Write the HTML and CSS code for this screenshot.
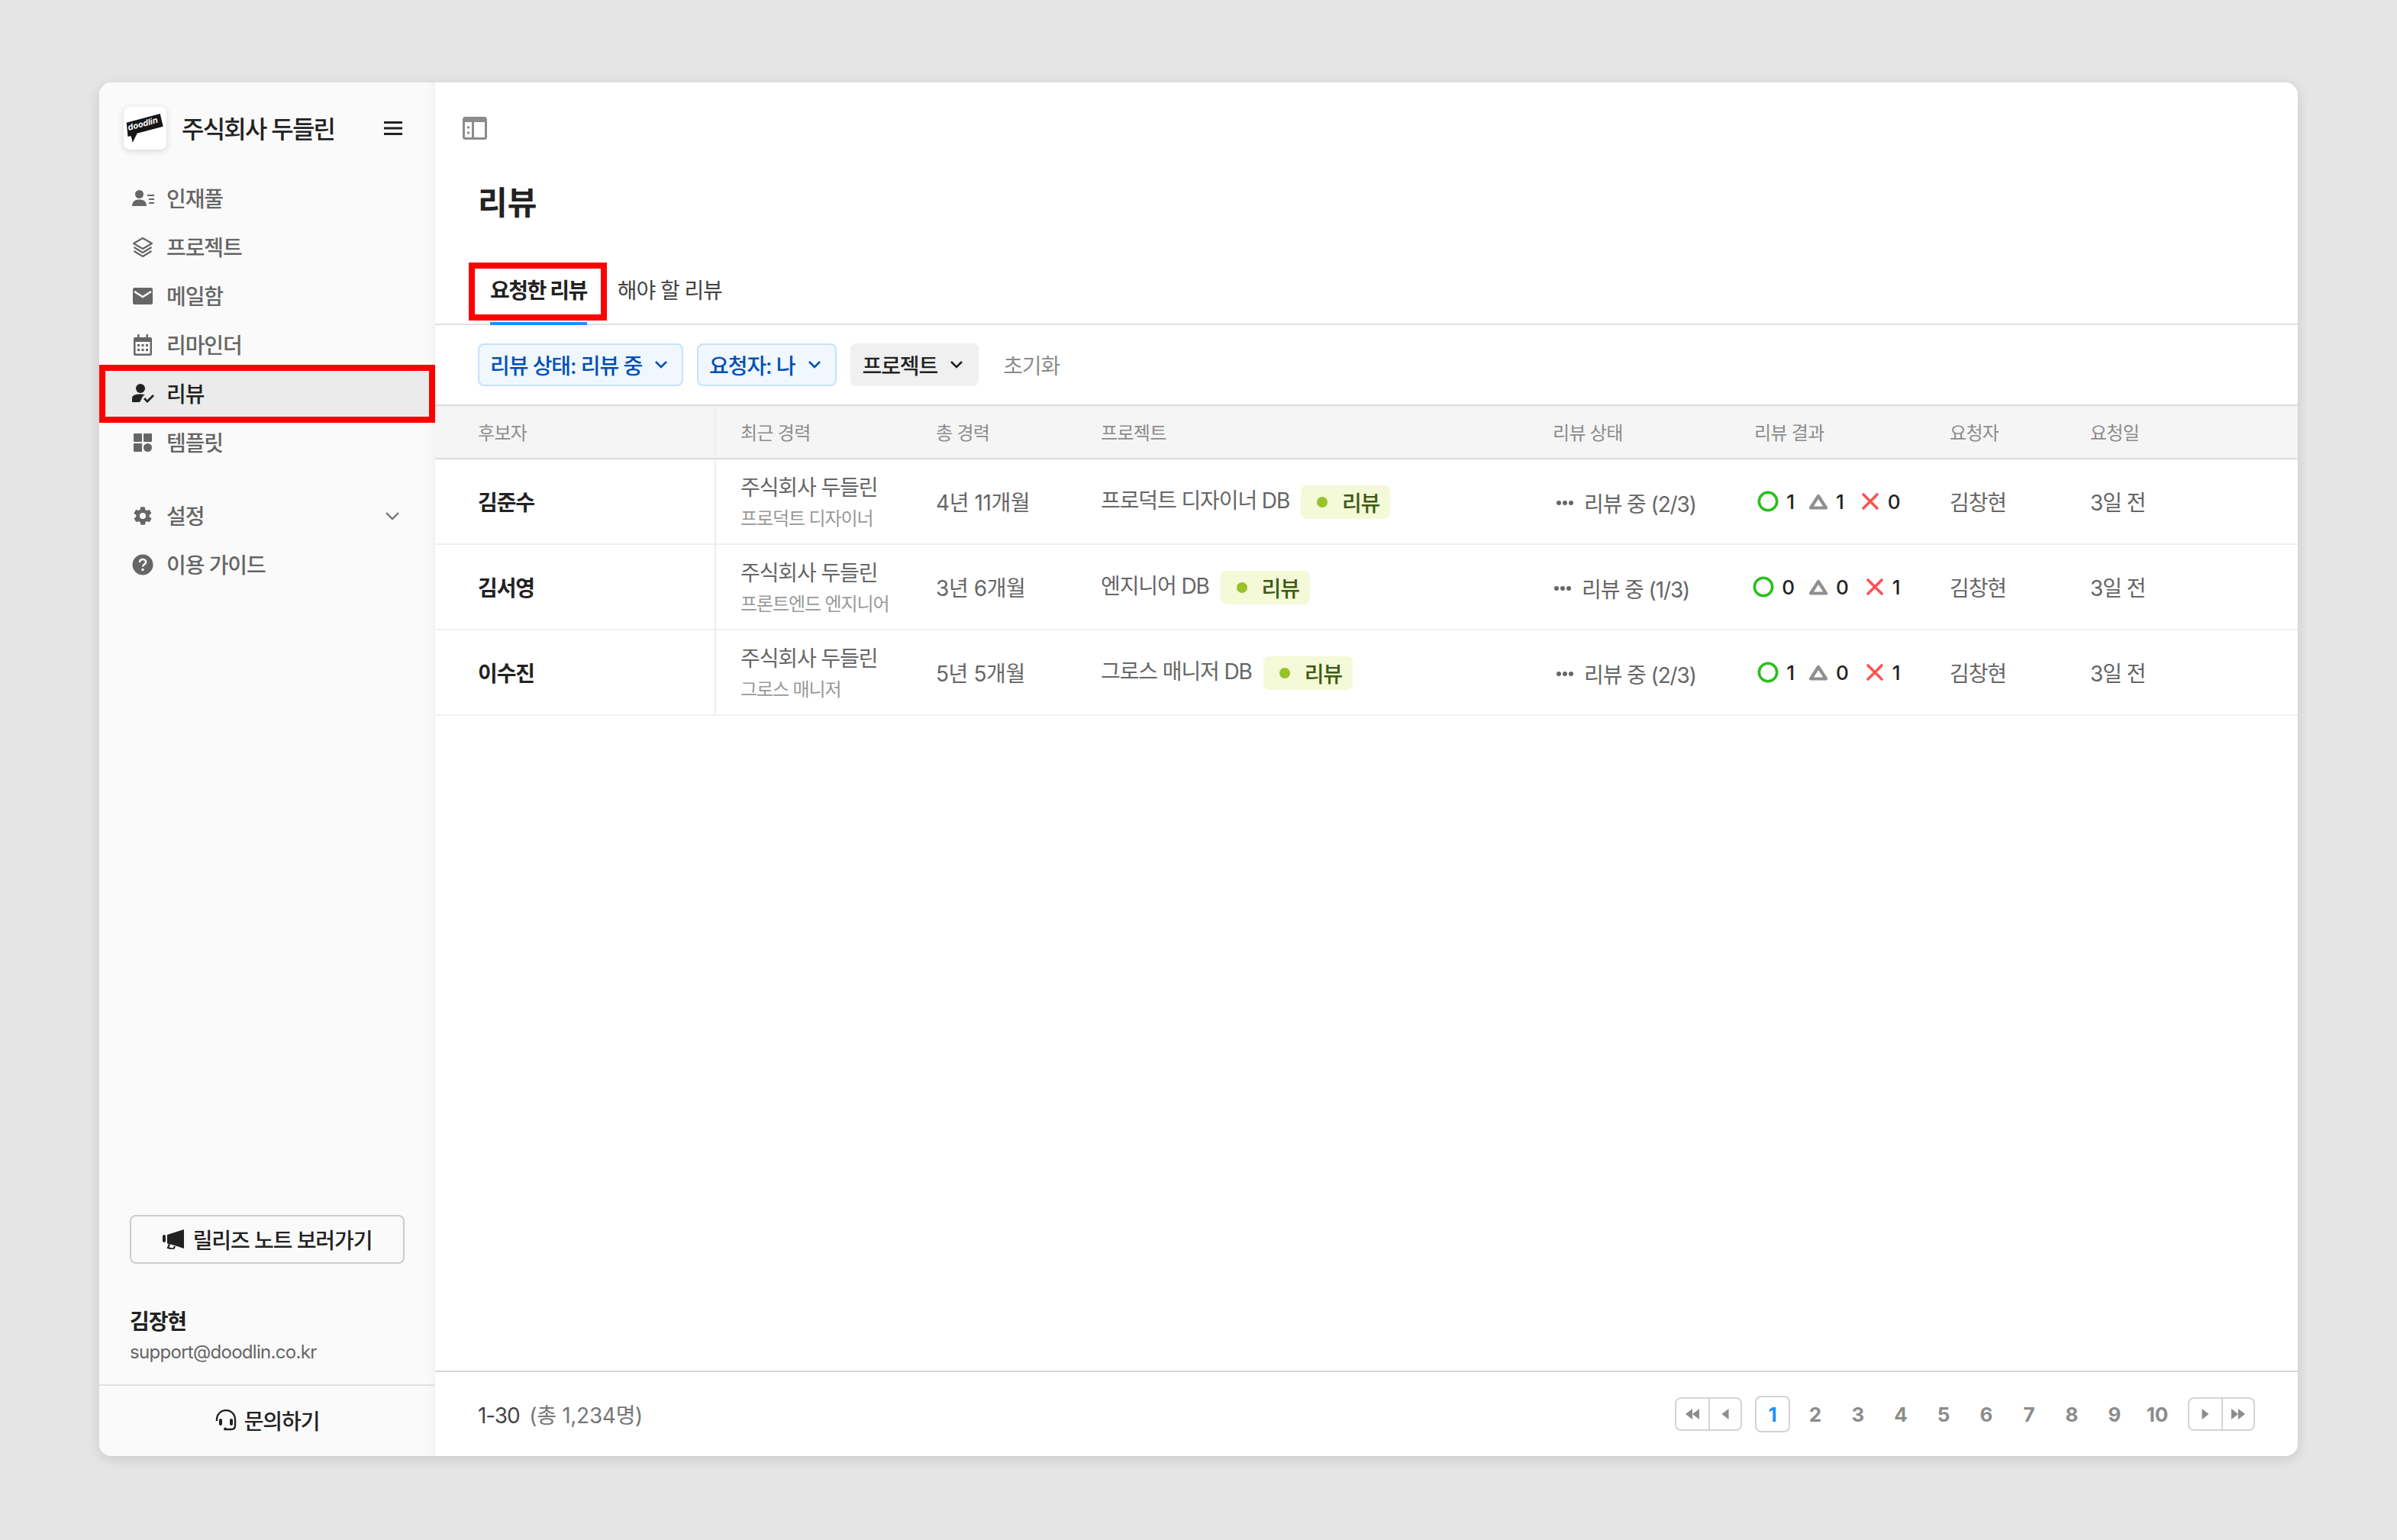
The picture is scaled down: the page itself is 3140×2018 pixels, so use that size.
FILE: index.html
```html
<!DOCTYPE html>
<html lang="ko">
<head>
  <meta charset="UTF-8" />
  <title>리뷰</title>
  <link rel="stylesheet" href="styles.css">
</head>
<body>
  <div class="app">
    <aside class="sidebar">
      <div class="brand">
        <div class="logo">
          <svg width="56" height="56" viewBox="0 0 56 56">
            <polygon points="3.7,20.7 47.7,9 51.7,25.7 17.7,34.7 11.7,46.7 9.7,38.3 5.5,39" fill="#161616"/>
            <text x="6.500" y="31" transform="rotate(-15 6.500 31)" class="logo-text">doodlin</text>
          </svg>
        </div>
        <span class="brand-name">주식회사 두들린</span>
        <svg class="burger" width="26" height="20" viewBox="0 0 26 20"><path d="M1 2.500h24M1 10h24M1 17.500h24" stroke="#222" stroke-width="3.200" fill="none"/></svg>
      </div>

      <nav class="nav">
        <a class="nav-item">
          <svg width="30" height="28" viewBox="0 0 30 28" fill="#666"><circle cx="10.500" cy="8.500" r="5.500"/><path d="M1 24c0-6 4-8.500 9.500-8.500S20 18 20 24z"/><path d="M21 9h9v2h-9zM23 14h7v2h-7zM23 19h7v2h-7z"/></svg>
          <span>인재풀</span>
        </a>
        <a class="nav-item">
          <svg width="28" height="28" viewBox="0 0 28 28" fill="none" stroke="#666" stroke-width="2.200" stroke-linejoin="round"><path d="M14 2 26 9 14 16 2 9z"/><path d="M2.500 14 14 21l11.500-7"/><path d="M2.500 19 14 26l11.500-7"/></svg>
          <span>프로젝트</span>
        </a>
        <a class="nav-item">
          <svg width="28" height="28" viewBox="0 0 28 28"><rect x="1" y="3" width="26" height="22" rx="2.500" fill="#666"/><path d="M3 8l11 7 11-7" fill="none" stroke="#fafafa" stroke-width="2.600"/></svg>
          <span>메일함</span>
        </a>
        <a class="nav-item">
          <svg width="28" height="28" viewBox="0 0 28 28" fill="#666"><path d="M7 0h2.500v4h9V0H21v4h3a2 2 0 0 1 2 2v20a2 2 0 0 1-2 2H4a2 2 0 0 1-2-2V6a2 2 0 0 1 2-2h3zM4.500 10v15.500h19V10z"/><path d="M7 13h3v3H7zM12.500 13h3v3h-3zM18 13h3v3h-3zM7 19h3v3H7zM12.500 19h3v3h-3zM18 19h3v3h-3z"/></svg>
          <span>리마인더</span>
        </a>
        <a class="nav-item is-active">
          <svg width="30" height="28" viewBox="0 0 30 28" fill="#222"><circle cx="12" cy="7" r="6"/><path d="M1 25v-5c0-4 4-5.500 11-5.500 2.500 0 4 .2 6 .8-2.500 1-4 3-4.500 5.500L11 25z"/><path d="M17 20l4 4 8-8" fill="none" stroke="#222" stroke-width="2.800"/></svg>
          <span>리뷰</span>
          <i class="mark"></i>
        </a>
        <a class="nav-item">
          <svg width="28" height="28" viewBox="0 0 28 28" fill="#666"><rect x="2" y="2" width="11" height="11" rx="1"/><rect x="15" y="2" width="11" height="11" rx="1"/><rect x="2" y="15" width="11" height="11" rx="1"/><circle cx="20.500" cy="20.500" r="5.500"/></svg>
          <span>템플릿</span>
        </a>
        <a class="nav-item nav-gap">
          <svg width="28" height="28" viewBox="0 0 24 24" fill="#666"><path d="M19.400 13c.1-.3.1-.7.1-1s0-.7-.1-1l2.100-1.600c.2-.2.2-.4.1-.6l-2-3.500c-.1-.2-.4-.3-.6-.2l-2.500 1c-.5-.4-1.100-.7-1.700-1l-.4-2.600c0-.3-.2-.5-.5-.5h-4c-.3 0-.5.200-.5.500l-.4 2.600c-.6.300-1.200.6-1.700 1l-2.500-1c-.2-.1-.5 0-.6.2l-2 3.500c-.1.200-.1.400.1.600L4.600 11c-.1.300-.1.700-.1 1s0 .7.100 1l-2.100 1.600c-.2.200-.2.400-.1.600l2 3.500c.1.200.4.300.6.200l2.500-1c.5.400 1.100.7 1.700 1l.4 2.600c0 .3.200.5.500.5h4c.3 0 .5-.2.500-.5l.4-2.600c.6-.3 1.200-.6 1.700-1l2.500 1c.2.100.5 0 .6-.2l2-3.500c.1-.2.100-.4-.1-.6zM12 15.500a3.500 3.500 0 1 1 0-7 3.500 3.500 0 0 1 0 7z"/></svg>
          <span>설정</span>
          <svg class="nav-chevron" width="20" height="12" viewBox="0 0 20 12"><path d="M2 2l8 8 8-8" fill="none" stroke="#777" stroke-width="2.400"/></svg>
        </a>
        <a class="nav-item">
          <svg width="28" height="28" viewBox="0 0 28 28"><circle cx="14" cy="14" r="13.500" fill="#666"/><path d="M10 11c0-2.500 1.800-4 4.100-4s4 1.500 4 3.500c0 3-4 3-4 6" fill="none" stroke="#fafafa" stroke-width="2.500"/><circle cx="14" cy="20.500" r="1.700" fill="#fafafa"/></svg>
          <span>이용 가이드</span>
        </a>
      </nav>

      <div class="side-bottom">
        <button class="release-btn">
          <svg width="28" height="26" viewBox="0 0 28 26" fill="#222"><rect x="0" y="7" width="4" height="10" rx="2"/><path d="M6 7l22-7v25l-14-4.500-8-2z"/><path d="M9 19l-2 5 7 2 2-4" fill="none" stroke="#222" stroke-width="2.200"/></svg>
          릴리즈 노트 보러가기
        </button>
        <div class="profile">
          <div class="profile-name">김장현</div>
          <div class="profile-mail">support@doodlin.co.kr</div>
        </div>
      </div>
      <div class="help">
        <svg width="28" height="28" viewBox="0 0 28 28" fill="none" stroke="#222" stroke-width="2.400"><path d="M2 15v-2a12 12 0 0 1 24 0v8c0 3-2 5-5 5h-7"/><rect x="5" y="12" width="4" height="9" rx="2" fill="#222" stroke="none"/><rect x="19" y="12" width="4" height="9" rx="2" fill="#222" stroke="none"/><circle cx="13" cy="25.500" r="2" fill="#222" stroke="none"/></svg>
        문의하기
      </div>
    </aside>

    <main class="main">
      <div class="topbar">
        <svg width="32" height="30" viewBox="0 0 32 30"><rect x="1.500" y="1.500" width="29" height="27" rx="2" fill="#fff" stroke="#8c8c8c" stroke-width="3"/><rect x="1" y="1" width="30" height="6" fill="#8c8c8c"/><path d="M13.500 7v22" stroke="#8c8c8c" stroke-width="3"/><circle cx="7.500" cy="14" r="1.800" fill="#8c8c8c"/><circle cx="7.500" cy="21" r="1.800" fill="#8c8c8c"/></svg>
      </div>
      <h1 class="title">리뷰</h1>
      <div class="tabs">
        <a class="tab is-active">요청한 리뷰<i class="mark"></i></a>
        <a class="tab">해야 할 리뷰</a>
      </div>
      <div class="filters">
        <button class="chip chip-on">리뷰 상태: 리뷰 중 <svg width="18" height="12" viewBox="0 0 18 12"><path d="M2 2l7 7 7-7" fill="none" stroke="currentColor" stroke-width="2.600"/></svg></button>
        <button class="chip chip-on">요청자: 나 <svg width="18" height="12" viewBox="0 0 18 12"><path d="M2 2l7 7 7-7" fill="none" stroke="currentColor" stroke-width="2.600"/></svg></button>
        <button class="chip">프로젝트 <svg width="18" height="12" viewBox="0 0 18 12"><path d="M2 2l7 7 7-7" fill="none" stroke="currentColor" stroke-width="2.600"/></svg></button>
        <span class="reset">초기화</span>
      </div>

      <div class="table">
        <div class="row head">
          <div class="cell first">후보자</div>
          <div class="cell second">최근 경력</div>
          <div class="cell">총 경력</div>
          <div class="cell">프로젝트</div>
          <div class="cell">리뷰 상태</div>
          <div class="cell">리뷰 결과</div>
          <div class="cell">요청자</div>
          <div class="cell">요청일</div>
        </div>

        <div class="row">
          <div class="cell first name">김준수</div>
          <div class="cell second"><div class="company">주식회사 두들린</div><div class="job">프로덕트 디자이너</div></div>
          <div class="cell career">4년 11개월</div>
          <div class="cell">프로덕트 디자이너 DB <span class="badge"><i></i>리뷰</span></div>
          <div class="cell"><span class="status"><b class="dots"><i></i><i></i><i></i></b>리뷰 중 (2/3)</span></div>
          <div class="cell">
            <div class="result">
              <span class="res res-o"><svg width="28" height="28" viewBox="0 0 28 28"><circle cx="14" cy="14" r="11.700" fill="none" stroke="#2dbe1f" stroke-width="3.600"/></svg>1</span>
              <span class="res"><svg width="26" height="24" viewBox="0 0 26 24"><path d="M13 5 23 20.500H3z" fill="none" stroke="#8f8f8f" stroke-width="4.200" stroke-linejoin="round"/></svg>1</span>
              <span class="res res-x"><svg width="24" height="24" viewBox="0 0 24 24"><path d="M3 3l18 18M21 3 3 21" stroke="#ff5252" stroke-width="3.600" stroke-linecap="round"/></svg>0</span>
            </div>
          </div>
          <div class="cell">김창현</div>
          <div class="cell">3일 전</div>
        </div>

        <div class="row">
          <div class="cell first name">김서영</div>
          <div class="cell second"><div class="company">주식회사 두들린</div><div class="job">프론트엔드 엔지니어</div></div>
          <div class="cell career">3년 6개월</div>
          <div class="cell">엔지니어 DB <span class="badge"><i></i>리뷰</span></div>
          <div class="cell"><span class="status status-left"><b class="dots"><i></i><i></i><i></i></b>리뷰 중 (1/3)</span></div>
          <div class="cell">
            <div class="result">
              <span class="res res-o"><svg width="28" height="28" viewBox="0 0 28 28"><circle cx="14" cy="14" r="11.700" fill="none" stroke="#2dbe1f" stroke-width="3.600"/></svg>0</span>
              <span class="res"><svg width="26" height="24" viewBox="0 0 26 24"><path d="M13 5 23 20.500H3z" fill="none" stroke="#8f8f8f" stroke-width="4.200" stroke-linejoin="round"/></svg>0</span>
              <span class="res res-x"><svg width="24" height="24" viewBox="0 0 24 24"><path d="M3 3l18 18M21 3 3 21" stroke="#ff5252" stroke-width="3.600" stroke-linecap="round"/></svg>1</span>
            </div>
          </div>
          <div class="cell">김창현</div>
          <div class="cell">3일 전</div>
        </div>

        <div class="row">
          <div class="cell first name">이수진</div>
          <div class="cell second"><div class="company">주식회사 두들린</div><div class="job">그로스 매니저</div></div>
          <div class="cell career">5년 5개월</div>
          <div class="cell">그로스 매니저 DB <span class="badge"><i></i>리뷰</span></div>
          <div class="cell"><span class="status"><b class="dots"><i></i><i></i><i></i></b>리뷰 중 (2/3)</span></div>
          <div class="cell">
            <div class="result">
              <span class="res res-o"><svg width="28" height="28" viewBox="0 0 28 28"><circle cx="14" cy="14" r="11.700" fill="none" stroke="#2dbe1f" stroke-width="3.600"/></svg>1</span>
              <span class="res"><svg width="26" height="24" viewBox="0 0 26 24"><path d="M13 5 23 20.500H3z" fill="none" stroke="#8f8f8f" stroke-width="4.200" stroke-linejoin="round"/></svg>0</span>
              <span class="res res-x"><svg width="24" height="24" viewBox="0 0 24 24"><path d="M3 3l18 18M21 3 3 21" stroke="#ff5252" stroke-width="3.600" stroke-linecap="round"/></svg>1</span>
            </div>
          </div>
          <div class="cell">김창현</div>
          <div class="cell">3일 전</div>
        </div>
      </div>

      <div class="footer">
        <div class="count"><span>1-30</span> <small>(총 1,234명)</small></div>
        <div class="pager">
          <div class="pg-group">
            <a><svg width="18" height="14" viewBox="0 0 18 14" fill="#8c8c8c"><path d="M9 0v14L0 7zM18 0v14L9 7z"/></svg></a>
            <a><svg width="10" height="14" viewBox="0 0 10 14" fill="#8c8c8c"><path d="M9.500 0v14L.5 7z"/></svg></a>
          </div>
          <div class="pg-nums">
            <a class="is-current">1</a><a>2</a><a>3</a><a>4</a><a>5</a><a>6</a><a>7</a><a>8</a><a>9</a><a>10</a>
          </div>
          <div class="pg-group">
            <a><svg width="10" height="14" viewBox="0 0 10 14" fill="#8c8c8c"><path d="M.5 0v14l9-7z"/></svg></a>
            <a><svg width="18" height="14" viewBox="0 0 18 14" fill="#8c8c8c"><path d="M0 0v14l9-7zM9 0v14l9-7z"/></svg></a>
          </div>
        </div>
      </div>
    </main>
  </div>
</body>
</html>
```

FILE: styles.css
```css
* { box-sizing: border-box; }
html, body { height: 100%; }
body {
  margin: 0;
  background: #e5e5e5;
  font-family: Inter, "Noto Sans CJK KR", sans-serif;
  font-size: 28px;
  color: #666;
  letter-spacing: -1.1px;
}
button { font: inherit; letter-spacing: inherit; cursor: pointer; }

/* Frame */
.app {
  display: flex;
  width: 2880px;
  height: 1800px;
  margin: 108px 0 0 130px;
  background: #fff;
  border-radius: 16px;
  overflow: hidden;
  box-shadow: 0 4px 16px rgba(0, 0, 0, 0.12);
}

/* Sidebar */
.sidebar {
  flex: 0 0 440px;
  display: flex;
  flex-direction: column;
  background: #fafafa;
  box-shadow: inset -14px 0 12px -12px rgba(0, 0, 0, 0.05);
}
.brand {
  display: flex;
  align-items: center;
  height: 120px;
  padding: 0 42px 0 32px;
}
.logo {
  width: 56px;
  height: 56px;
  background: #fff;
  border-radius: 8px;
  box-shadow: 0 2px 8px rgba(0, 0, 0, 0.15);
}
.logo svg { display: block; }
.logo-text { font: italic 700 11px Inter, sans-serif; fill: #fff; letter-spacing: 0; }
.brand-name {
  flex: 1;
  margin-left: 20px;
  padding-bottom: 2px;
  font-size: 32px;
  font-weight: 500;
  color: #222;
  letter-spacing: -1.8px;
}
.burger { display: block; }

.nav-item {
  position: relative;
  display: flex;
  align-items: center;
  gap: 16px;
  height: 64px;
  padding: 0 46px 0 42px;
  color: #666;
  font-weight: 500;
}
.nav-item span { padding-bottom: 2px; }
.nav-item svg:first-child { width: 30px; flex: none; }
.nav-item.is-active { background: #ebebeb; color: #222; }
.nav-gap { margin-top: 32px; }
.nav-chevron { margin-left: auto; }

/* red annotation boxes */
.mark {
  position: absolute;
  border: 8px solid #ff0000;
  pointer-events: none;
}
.nav-item .mark { top: -6px; bottom: -6px; left: 0; right: 0; }
.tab .mark { top: -10px; bottom: 2px; left: -28px; right: -26px; }

.side-bottom {
  margin-top: auto;
  padding: 0 40px 24px;
}
.release-btn {
  display: flex;
  align-items: center;
  justify-content: center;
  gap: 12px;
  width: 360px;
  height: 64px;
  background: #fafafa;
  border: 2px solid #ccc;
  border-radius: 8px;
  color: #222;
  font-weight: 500;
}
.profile { margin-top: 56px; }
.profile-name { color: #222; font-weight: 600; line-height: 40px; }
.profile-mail { margin-top: 2px; font-size: 24px; color: #666; letter-spacing: -0.7px; line-height: 36px; }
.help {
  display: flex;
  align-items: center;
  justify-content: center;
  gap: 10px;
  height: 94px;
  padding-bottom: 2px;
  border-top: 2px solid #e0e0e0;
  color: #222;
  font-weight: 500;
}

/* Main */
.main {
  flex: 1;
  display: flex;
  flex-direction: column;
  min-width: 0;
}
.topbar { height: 118px; padding: 45px 0 0 36px; }
.topbar svg { display: block; }
.title {
  margin: 0 0 0 56px;
  font-size: 42px;
  line-height: 80px;
  font-weight: 600;
  color: #222;
  letter-spacing: 0;
}
.tabs {
  display: flex;
  gap: 40px;
  height: 120px;
  padding: 48px 0 0 72px;
  border-bottom: 2px solid #e0e0e0;
}
.tab { position: relative; display: block; height: 72px; line-height: 54px; color: #444; }
.tab.is-active { color: #222; font-weight: 600; border-bottom: 4px solid #1e8fff; letter-spacing: -1.5px; }

.filters {
  display: flex;
  align-items: center;
  gap: 18px;
  height: 104px;
  padding-left: 56px;
}
.chip {
  display: flex;
  align-items: center;
  gap: 16px;
  height: 56px;
  padding: 0 18px 0 14px;
  background: #f0f0f0;
  border: 2px solid #f0f0f0;
  border-radius: 8px;
  color: #222;
  font-weight: 500;
}
.chip-on { background: #f0f7ff; border-color: #c5e2ff; color: #0050b3; }
.reset { margin-left: 14px; color: #8c8c8c; }

/* Table */
.row {
  display: grid;
  grid-template-columns: 366px 290px 216px 592px 264px 256px 184px 1fr;
  align-items: center;
  height: 112px;
  border-bottom: 2px solid #f0f0f0;
}
.cell { white-space: nowrap; }
.first { padding-left: 56px; }
.second {
  align-self: stretch;
  display: flex;
  flex-direction: column;
  justify-content: center;
  padding-left: 32px;
  border-left: 2px solid #ededed;
}
.head {
  height: 72px;
  padding-bottom: 2px;
  background: #f5f5f5;
  border-top: 2px solid #dcdcdc;
  border-bottom: 2px solid #dcdcdc;
  color: #8c8c8c;
  font-size: 24px;
  letter-spacing: -0.7px;
}
.name { color: #222; font-weight: 700; }
.career { letter-spacing: -0.4px; }
.company { margin-top: 4px; line-height: 38px; }
.job { margin-top: 4px; color: #999; font-size: 24px; line-height: 36px; }
.badge {
  display: inline-flex;
  align-items: center;
  gap: 19px;
  height: 44px;
  margin-left: 8px;
  padding: 0 14px 0 21px;
  background: #f4f9d8;
  border-radius: 8px;
  color: #3d5a12;
  font-weight: 500;
  vertical-align: middle;
}
.badge i { width: 14px; height: 14px; border-radius: 50%; background: #97c22a; }
.status { display: inline-flex; align-items: center; gap: 14px; margin-left: 5px; }
.status-left { margin-left: 2px; }
.dots { display: inline-flex; gap: 2px; }
.dots i { width: 6px; height: 6px; border-radius: 50%; background: #666; }

.result { display: flex; align-items: center; gap: 18px; color: #222; font-size: 26px; font-weight: 500; letter-spacing: 0; }
.res { display: inline-flex; align-items: center; gap: 10px; }
.res svg { flex: none; }
.res-o { justify-content: flex-end; width: 53px; }
.res-x { gap: 11px; margin-left: 4px; }

/* Footer */
.footer {
  display: flex;
  align-items: center;
  justify-content: space-between;
  height: 112px;
  margin-top: auto;
  padding: 0 56px;
  border-top: 2px solid #d8d8d8;
}
.count span { color: #444; }
.count small { margin-left: 6px; font-size: 28px; color: #777; letter-spacing: -0.3px; }
.pager { display: flex; align-items: center; gap: 17px; font-size: 26px; letter-spacing: 0; }
.pg-group { display: flex; height: 44px; border: 2px solid #d4d4d4; border-radius: 8px; }
.pg-group a { display: flex; align-items: center; justify-content: center; width: 42px; }
.pg-group a + a { border-left: 2px solid #d4d4d4; }
.pg-nums { display: flex; gap: 10px; }
.pg-nums a {
  display: flex;
  align-items: center;
  justify-content: center;
  width: 46px;
  height: 48px;
  color: #8c8c8c;
  font-weight: 700;
  border: 2px solid transparent;
  border-radius: 8px;
}
.pg-nums a.is-current { border-color: #d4d4d4; color: #1e8fff; }
```
